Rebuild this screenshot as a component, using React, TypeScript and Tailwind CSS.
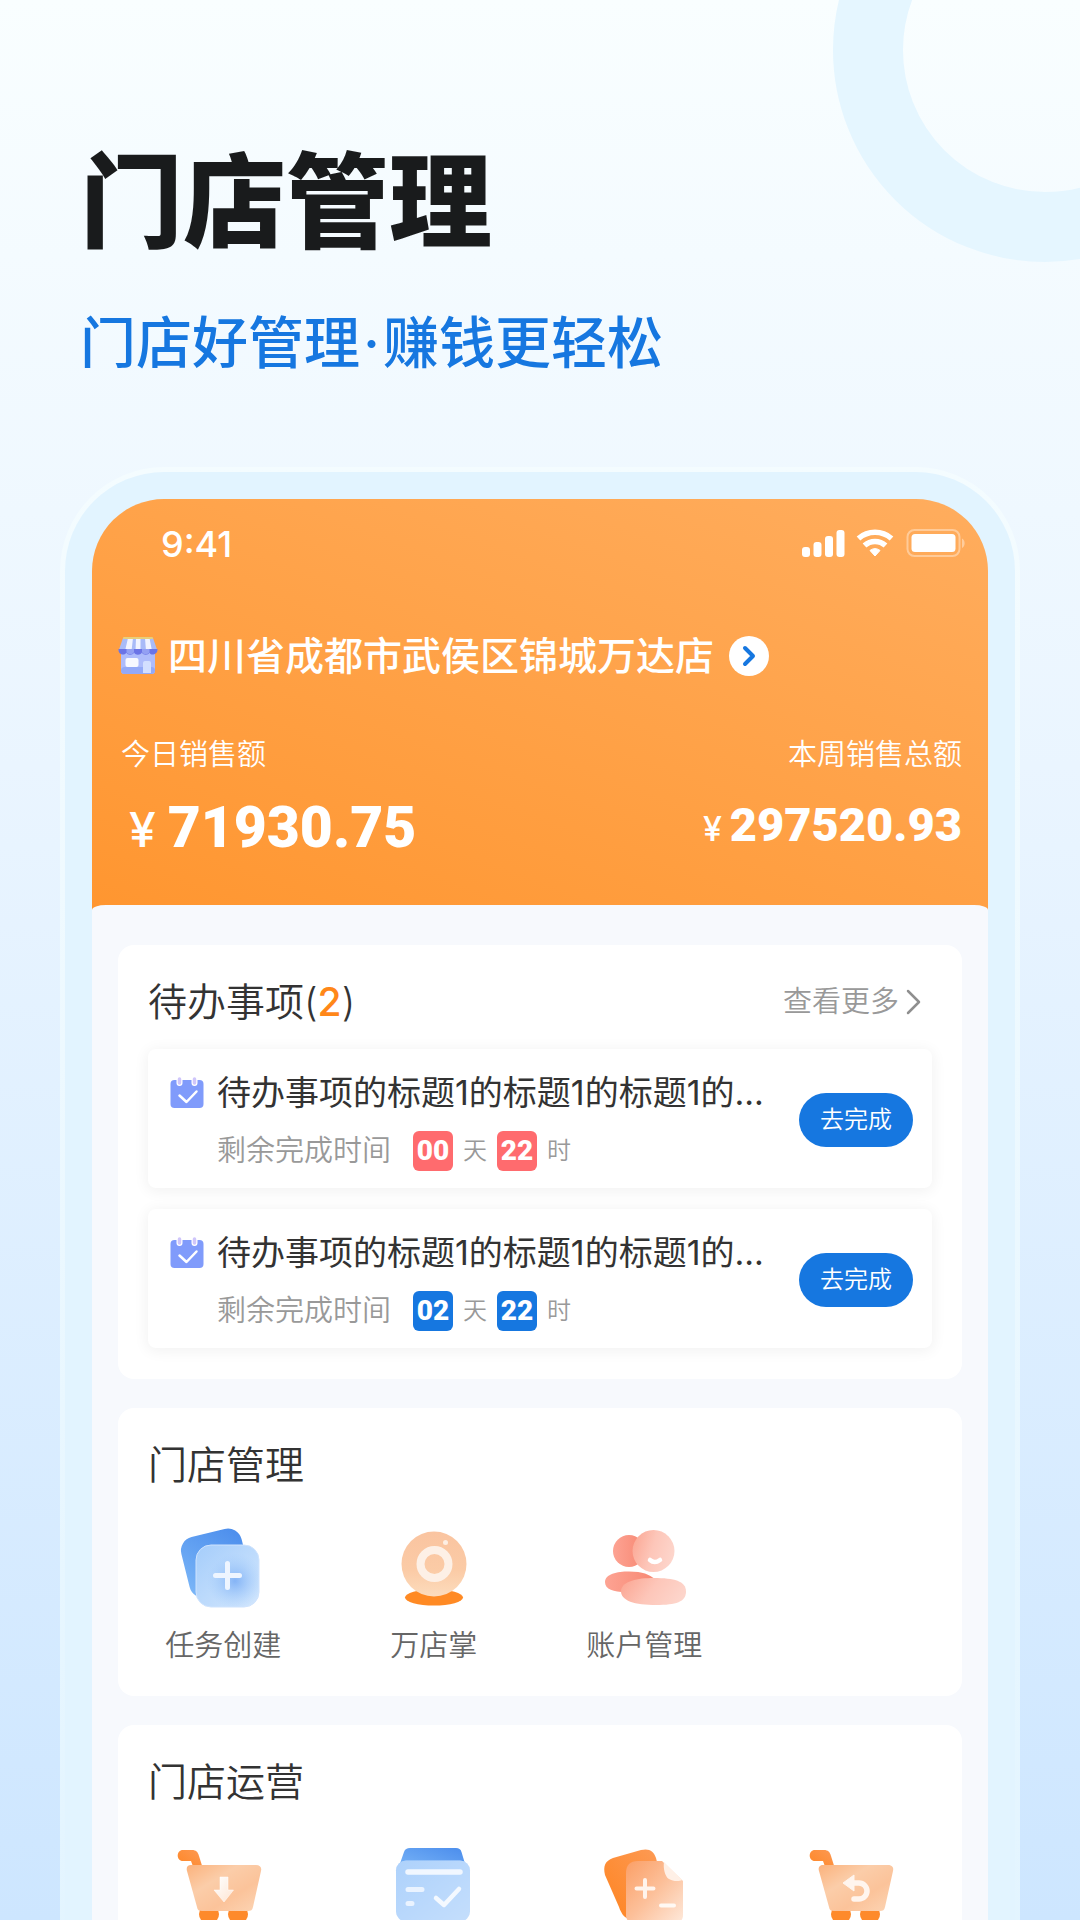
import { ChevronRight } from "lucide-react";
import type { ReactNode } from "react";

const todos = [
  { id: 1, title: "待办事项的标题1的标题1的标题1的...", days: "00", hours: "22", urgent: true },
  { id: 2, title: "待办事项的标题1的标题1的标题1的...", days: "02", hours: "22", urgent: false },
];

const StatusIcons = () => {
  return (
    <svg width="164" height="30" viewBox="0 0 164 30" fill="#fff" aria-hidden="true">
      <rect x="0" y="18" width="8" height="10" rx="3" />
      <rect x="11.500" y="13" width="8" height="15" rx="3" />
      <rect x="23" y="7" width="8" height="21" rx="3" />
      <rect x="34.500" y="1" width="8" height="27" rx="3" />
      <g fill="none" stroke="#fff" strokeWidth="5.500">
        <path d="M56.500 9.500a25 25 0 0 1 33 0" />
        <path d="M62.500 16.500a15.500 15.500 0 0 1 21 0" />
      </g>
      <path d="M73 27l-5-5.500c3-2.500 7-2.500 10 0z" stroke="#fff" strokeLinejoin="round" />
      <rect x="105.500" y="1" width="52" height="26" rx="7" fill="none" stroke="#fff" strokeOpacity=".38" strokeWidth="2" />
      <rect x="109.500" y="5" width="44" height="18" rx="3.500" />
      <path d="M160 9.500c3.500 1.500 3.500 8 0 9.500z" fillOpacity=".4" />
    </svg>
  );
};

const StoreIcon = () => {
  return (
    <svg width="40" height="40" viewBox="0 0 40 40" aria-hidden="true">
      <rect x="3" y="14" width="34" height="24" rx="3.500" fill="#aebcfb" />
      <rect x="3" y="31" width="34" height="7" rx="3.500" fill="#93a9f7" />
      <rect x="7.500" y="22" width="13" height="9" rx="2" fill="#f7f9ff" />
      <path d="M25 37V27a2 2 0 0 1 2-2h4a2 2 0 0 1 2 2v10z" fill="#d3dfff" />
      <path d="M5 2h30l4.500 13h-39z" fill="#a9bbf8" />
      <path d="M10 2h5l-1.500 13H7zM18 2h4.500v13h-5zM27 2h4.500L34 15h-6z" fill="#f2f4ff" />
      <rect x="5" y="1" width="30" height="2" rx="1" fill="#e9cf7a" />
      <path d="M.5 13h39c.5 6-7.500 7-7.800 3.500-1.500 3-6.500 3-7.800 0-1.500 3-6.500 3-7.800 0-1.500 3-6.500 3-7.800 0C7 20 0 19 .5 13z" fill="#6b74e6" />
      <path d="M8.500 13h7.500v3c-1 3-6.500 3-7.500 0zM24 13h7.500v3c-1 3-6.500 3-7.500 0z" fill="#93a0f3" />
    </svg>
  );
};

const CalendarIcon = () => {
  return (
    <svg width="34" height="34" viewBox="0 0 34 34" fill="none" aria-hidden="true">
      <rect x=".5" y="4" width="33" height="28" rx="4" fill="#809bfb" />
      <path d="M9.500 3v4M24.500 3v4" stroke="#fff" strokeWidth="6" strokeLinecap="round" />
      <path d="M9.500 3v4M24.500 3v4" stroke="#cfc6fb" strokeWidth="3.500" strokeLinecap="round" />
      <path d="M9.500 19.500l7 6.500 10-10.500" stroke="#fff" strokeWidth="2.500" strokeLinecap="round" strokeLinejoin="round" />
    </svg>
  );
};

const Gradients = () => {
  return (
    <svg width="0" height="0" className="absolute" aria-hidden="true">
      <defs>
        <linearGradient id="blueBack" x1="1" y1="0" x2="0" y2="1">
          <stop offset="0" stopColor="#4a8cec" />
          <stop offset="1" stopColor="#7db8f8" />
        </linearGradient>
        <linearGradient id="blueFront" x1="0" y1="0" x2="1" y2="1">
          <stop offset="0" stopColor="#a5cdfb" />
          <stop offset="1" stopColor="#d3e7fd" />
        </linearGradient>
        <radialGradient id="blueGlow" cx=".62" cy=".58" r=".45">
          <stop offset="0" stopColor="#85b4f6" />
          <stop offset="1" stopColor="#a5cdfb" stopOpacity="0" />
        </radialGradient>
        <linearGradient id="orangeBack" x1="1" y1="0" x2="0" y2="1">
          <stop offset="0" stopColor="#fd9a55" />
          <stop offset="1" stopColor="#fe8420" />
        </linearGradient>
        <linearGradient id="camera" x1="0" y1="0" x2="0" y2="1">
          <stop offset="0" stopColor="#fac4a0" />
          <stop offset=".6" stopColor="#fbcba6" />
          <stop offset="1" stopColor="#fcdcbd" />
        </linearGradient>
        <linearGradient id="basket" x1="0" y1="0" x2="1" y2="1">
          <stop offset="0" stopColor="#fbb27c" />
          <stop offset=".35" stopColor="#fbcda9" />
          <stop offset=".65" stopColor="#fbc39a" />
          <stop offset="1" stopColor="#fcd5b5" />
        </linearGradient>
        <linearGradient id="docFront" x1="0" y1="0" x2="1" y2="1">
          <stop offset="0" stopColor="#fb9f66" />
          <stop offset=".5" stopColor="#fcc09a" />
          <stop offset="1" stopColor="#fee9db" />
        </linearGradient>
        <linearGradient id="redBack" x1="0" y1="0" x2="1" y2="0">
          <stop offset="0" stopColor="#fda393" />
          <stop offset="1" stopColor="#f78873" />
        </linearGradient>
        <linearGradient id="redFront" x1="0" y1=".2" x2="1" y2=".5">
          <stop offset="0" stopColor="#fba794" />
          <stop offset=".5" stopColor="#fdc6b9" />
          <stop offset="1" stopColor="#fdd5cb" />
        </linearGradient>
        <linearGradient id="fade" x1="0" y1="0" x2="1" y2="1">
          <stop offset="0" stopColor="#fff" />
          <stop offset="1" stopColor="#fff" stopOpacity=".55" />
        </linearGradient>
      </defs>
    </svg>
  );
};

const Glyph = ({ children }: { children: ReactNode }) => {
  return (
    <svg width="90" height="90" viewBox="0 0 90 90" fill="none" overflow="visible" aria-hidden="true">
      {children}
    </svg>
  );
};

const TaskIcon = () => (
  <Glyph>
    <rect x="0" y="17.500" width="62" height="62" rx="14" transform="rotate(-14 0 17.500)" fill="url(#blueBack)" />
    <rect x="18" y="22" width="63" height="62" rx="15" fill="url(#blueFront)" />
    <rect x="18" y="22" width="63" height="62" rx="15" fill="url(#blueGlow)" stroke="#cfe3fd" strokeWidth="1" />
    <path d="M49.500 40.500v24M37.500 52.500h24" stroke="#eef5ff" strokeWidth="5" strokeLinecap="round" />
  </Glyph>
);

const CameraIcon = () => (
  <Glyph>
    <ellipse cx="45" cy="74.500" rx="29" ry="8" fill="#ff8a24" />
    <circle cx="45" cy="41" r="32.500" fill="url(#camera)" />
    <circle cx="45.500" cy="41" r="14" stroke="#fdf0e6" strokeWidth="8" />
    <circle cx="56.500" cy="19.500" r="2.500" fill="#fdeee3" />
  </Glyph>
);

const AccountIcon = () => (
  <Glyph>
    <circle cx="30" cy="28" r="16" fill="url(#redBack)" />
    <path d="M6 59c0-8 12-10.500 24-10.500 14 0 20 3 26 7.500L30 69C16 69.500 6 67 6 59z" fill="url(#redBack)" />
    <circle cx="54.500" cy="28" r="21" fill="url(#redFront)" />
    <path d="M22 67c2-9 16-12 33-12 20 0 32 3 32 13.500C87 79 77 82 57 82 36 82 21 78 22 67z" fill="url(#redFront)" />
    <path d="M51 37q4.500 4 10 0" stroke="#fff" strokeWidth="4.500" strokeLinecap="round" />
  </Glyph>
);

const CartIcon = ({ children }: { children: ReactNode }) => (
  <Glyph>
    <path d="M5 10h9c4 0 6 2 7 6l5 16h-9l-4-11H5c-7 0-7-11 0-11z" fill="url(#orangeBack)" />
    <circle cx="31" cy="74" r="10" fill="#fe8a2b" />
    <circle cx="60" cy="74" r="10" fill="#fe8a2b" />
    <path d="M13 25h65c4 0 6 2.500 5 6l-8 36c-.7 3-2 4-5 4H24c-3 0-4.500-1-5-4L9 31c-1-3.500.5-6 4-6z" fill="url(#basket)" />
    {children}
  </Glyph>
);

const ListIcon = () => (
  <Glyph>
    <path d="M21 8h46c3 0 4.500 1 5.500 4l6 20H8l7-20c1-3 3-4 6-4z" fill="url(#blueBack)" />
    <rect x="7" y="20.500" width="74" height="61" rx="10" fill="url(#blueFront)" />
    <rect x="7" y="20.500" width="74" height="61" rx="10" fill="#b5d5fb" fillOpacity=".5" />
    <path d="M19 32h52" stroke="#f1f7ff" strokeWidth="5.500" strokeLinecap="round" />
    <path d="M19 49.500h14M19 63.500h4" stroke="#eaf3ff" strokeWidth="5" strokeLinecap="round" />
    <path d="M47 58l8 7 15-16" stroke="#f4f9ff" strokeWidth="4.500" strokeLinecap="round" strokeLinejoin="round" />
  </Glyph>
);

const DocIcon = () => (
  <Glyph>
    <path d="M14 18l28-8c8-2 13 1 15 8l2 8-31 52c-3-1-6-5-8-11L6 35c-2-9 0-14 8-17z" fill="url(#orangeBack)" />
    <path d="M39 21h24l21 20v34c0 5-3 8-8 8H36c-6 0-9-3-9-8V33c0-8 4-12 12-12z" fill="url(#docFront)" />
    <path d="M65 22l18 18c-3 2-10 1-13-1-4-2-6-11-5-17z" fill="#fff0e6" />
    <path d="M46 40v17M37.500 48.500h17" stroke="#fff4ec" strokeWidth="4" strokeLinecap="round" />
    <path d="M62 65.500h13" stroke="#fff9f4" strokeWidth="4" strokeLinecap="round" />
  </Glyph>
);

const Badge = ({ value, urgent }: { value: string; urgent: boolean }) => {
  return (
    <span
      className={`flex size-10 items-center justify-center rounded-md font-[Roboto] text-[28px] leading-none font-black ${urgent ? "bg-[#ff6b6e]" : "bg-[#1677e0]"} text-white`}
    >
      {value}
    </span>
  );
};

const TodoItem = ({ title, days, hours, urgent }: { title: string; days: string; hours: string; urgent: boolean }) => {
  return (
    <li className="flex items-center rounded-lg bg-white pt-5 pr-[19px] pb-[17px] pl-[22px] shadow-[0_2px_14px_2px_rgba(0,0,0,0.05)]">
      <div className="min-w-0 flex-1">
        <div className="flex items-center gap-[13px]">
          <CalendarIcon />
          <h3 className="truncate text-[34px] leading-[48px] font-normal text-[#333]">{title}</h3>
        </div>
        <div className="mt-[14px] flex h-10 items-center pl-[47px] text-[#999]">
          <span className="mr-[22px] text-[29px] leading-10">剩余完成时间</span>
          <Badge value={days} urgent={urgent} />
          <span className="mx-[10px] text-2xl">天</span>
          <Badge value={hours} urgent={urgent} />
          <span className="ml-[10px] text-2xl">时</span>
        </div>
      </div>
      <button className="h-[54px] w-[114px] shrink-0 rounded-full bg-[#1677e0] text-2xl text-white">去完成</button>
    </li>
  );
};

const Entry = ({ icon, label }: { icon: ReactNode; label?: string }) => {
  return (
    <a href="#" className="flex flex-col items-center gap-[13px]">
      {icon}
      {label && <span className="text-[29px] leading-10 text-[#666]">{label}</span>}
    </a>
  );
};

const Section = ({ title, children }: { title: string; children: ReactNode }) => {
  return (
    <section className="rounded-2xl bg-white py-[30px]">
      <h2 className="pl-[30px] text-[39px] leading-[54px] text-[#333]">{title}</h2>
      <nav className="mt-[31px] grid grid-cols-4 pr-0.5">{children}</nav>
    </section>
  );
};

export default function App() {
  return (
    <main className="relative h-screen overflow-hidden bg-linear-to-b from-[#f9feff] via-[#eaf5ff] via-40% to-[#cde6ff] font-[Inter,'Noto_Sans_CJK_SC',sans-serif] font-[350]">
      <Gradients />
      <div className="absolute -top-[162px] -right-[177px] size-[424px] rounded-full border-[70px] border-[#e5f6ff]" />

      <header className="relative px-[80px] pt-[129px]">
        <h1 className="text-[103px] leading-[148px] font-black text-[#191b1c]">门店管理</h1>
        <p className="mt-[26px] text-[56px] leading-[80px] font-medium text-[#1677e0]">
          门店好管理<span className="mx-[3px]">·</span>赚钱更轻松
        </p>
      </header>

      <div className="relative mx-[60px] mt-[84px] rounded-t-[104px] bg-linear-to-b from-[#f4fcff] to-[#e2f4ff] px-[5px] pt-[5px]">
        <div className="rounded-t-[99px] bg-[#e2f4ff] px-[27px] pt-[27px]">
          <div className="overflow-hidden rounded-t-[72px] bg-[linear-gradient(200deg,#ffad5e_0px,#ff9630_690px)]">
            <div className="flex items-center justify-between pt-[25px] pr-[22px] pl-[69px] text-[36px] leading-[40px] font-medium text-white">
              <span>9:41</span>
              <StatusIcons />
            </div>

            <div className="px-[26px] pt-[63px] text-white">
              <button className="flex items-center">
                <StoreIcon />
                <span className="ml-[10px] text-[39px] leading-[58px] font-medium">四川省成都市武侯区锦城万达店</span>
                <span className="ml-[15px] flex size-10 items-center justify-center rounded-full bg-white text-[#1677e0]">
                  <ChevronRight size={32} strokeWidth={3} />
                </span>
              </button>
              <dl className="mt-[50px] flex items-start justify-between">
                <div>
                  <dt className="pl-[3px] text-[29px] leading-10">今日销售额</dt>
                  <dd className="mt-[18px] flex items-baseline gap-3 pl-[11px]">
                    <span className="text-[48px] leading-[70px] font-medium">¥</span>
                    <span className="font-[Roboto] text-[57px] leading-[70px] font-black">71930.75</span>
                  </dd>
                </div>
                <div className="text-right">
                  <dt className="text-[29px] leading-10">本周销售总额</dt>
                  <dd className="mt-[15px] flex items-baseline gap-2">
                    <span className="text-[34px] leading-[70px] font-medium">¥</span>
                    <span className="font-[Roboto] text-[47px] leading-[70px] font-black">297520.93</span>
                  </dd>
                </div>
              </dl>
            </div>

            <div className="mt-10 flex flex-col gap-[29px] rounded-t-[14px_5px] bg-[#f7f9fd] px-[26px] py-10">
              <section className="rounded-2xl bg-white px-[30px] pt-[30px] pb-[31px]">
                <div className="flex items-center justify-between">
                  <h2 className="text-[39px] leading-[54px] text-[#333]">
                    待办事项(<span className="font-medium text-[#ff8719]">2</span>)
                  </h2>
                  <a href="#" className="flex items-center text-[29px] text-[#999]">
                    查看更多
                    <svg width="33" height="34" viewBox="0 0 33 34" fill="none" aria-hidden="true">
                      <path d="M9 6l11 11L9 28" stroke="#8f8f8f" strokeWidth="2.500" strokeLinecap="round" strokeLinejoin="round" />
                    </svg>
                  </a>
                </div>
                <ul className="mt-5 flex flex-col gap-[21px]">
                  {todos.map((todo) => (
                    <TodoItem key={todo.id} {...todo} />
                  ))}
                </ul>
              </section>

              <Section title="门店管理">
                <Entry icon={<TaskIcon />} label="任务创建" />
                <Entry icon={<CameraIcon />} label="万店掌" />
                <Entry icon={<AccountIcon />} label="账户管理" />
              </Section>

              <Section title="门店运营">
                <Entry
                  icon={
                    <CartIcon>
                      <path d="M42 37h8v13h5.500L46 62 36 50h6z" fill="url(#fade)" stroke="#fff" strokeOpacity=".5" strokeLinejoin="round" />
                    </CartIcon>
                  }
                />
                <Entry icon={<ListIcon />} />
                <Entry icon={<DocIcon />} />
                <Entry
                  icon={
                    <CartIcon>
                      <path d="M43 43h6a8 8 0 0 1 0 16h-5" stroke="#fff5ee" strokeWidth="5.500" strokeLinecap="round" />
                      <path d="M44 35v16l-11-8z" fill="#fff5ee" stroke="#fff5ee" strokeLinejoin="round" />
                    </CartIcon>
                  }
                />
              </Section>
            </div>
          </div>
        </div>
      </div>
    </main>
  );
}
